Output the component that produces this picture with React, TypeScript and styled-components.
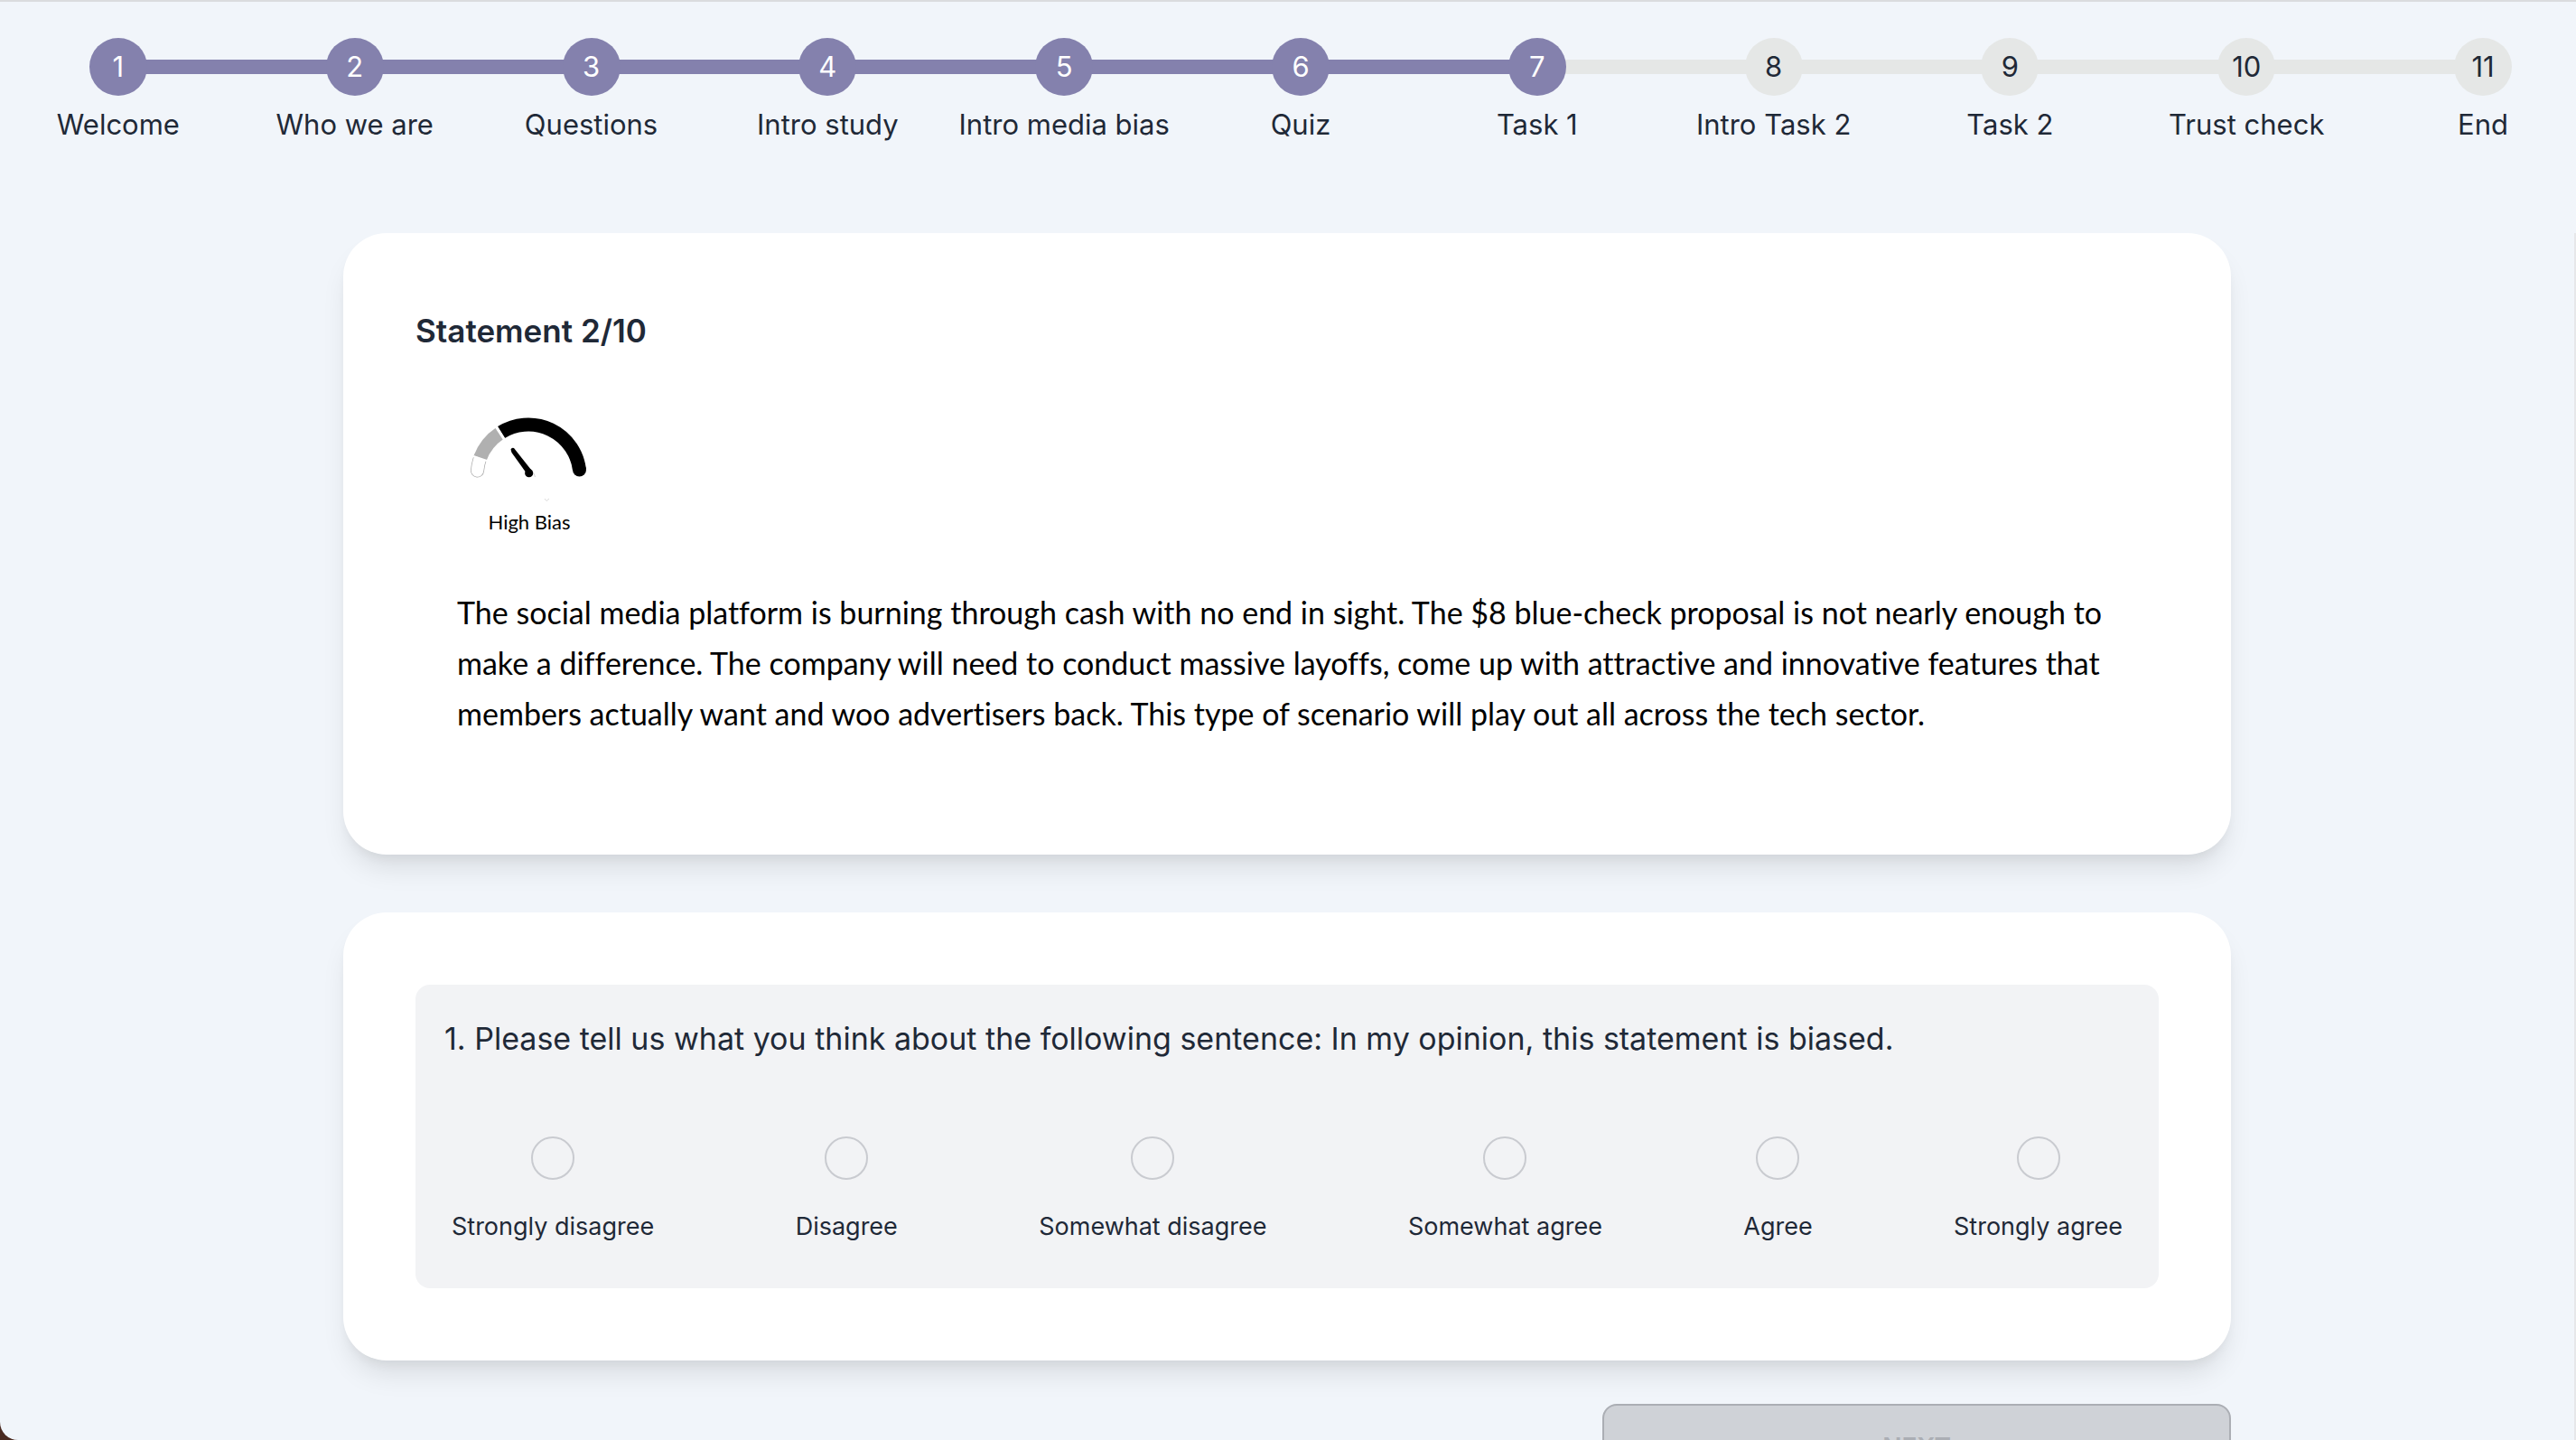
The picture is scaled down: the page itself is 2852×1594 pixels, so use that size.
import React, { useState } from "react";
import styled, { createGlobalStyle } from "styled-components";

const ink = "#1f2937";
const purple = "#8481ad";
const mist = "#e5e7e6";

const GlobalStyle = createGlobalStyle`
  *, *::before, *::after { box-sizing: border-box; }
  body {
    margin: 0;
    background: #4a2a20;
    color: ${ink};
    font-family: Inter, "Liberation Sans", sans-serif;
  }
`;

const Page = styled.div`
  display: flex;
  flex-direction: column;
  height: 100vh;
  overflow: hidden;
  background: #f1f5fa;
  border-top: 2px solid #dadcde;
  border-bottom-left-radius: 20px;
`;

const Steps = styled.ol`
  display: grid;
  grid-auto-flow: column;
  grid-auto-columns: 1fr;
  flex: none;
  margin: 0 -28px 0 0;
  padding: 40px 0 100px;
  list-style: none;
`;

const Step = styled.li`
  display: flex;
  flex-direction: column;
  gap: 12px;
  min-width: 0;
`;

const Track = styled.div`
  display: flex;
  align-items: center;
`;

const Line = styled.span<{ $color: string }>`
  flex: 1;
  height: 16px;
  margin: 0 -2px;
  background: ${(p) => p.$color};
`;

const Dot = styled.span<{ $done: boolean }>`
  display: flex;
  align-items: center;
  justify-content: center;
  position: relative;
  width: 64px;
  height: 64px;
  border-radius: 50%;
  background: ${(p) => (p.$done ? purple : mist)};
  color: ${(p) => (p.$done ? "#ffffff" : ink)};
  font-size: 31px;
  line-height: 40px;
`;

const StepLabel = styled.span`
  font-size: 31px;
  line-height: 40px;
  text-align: center;
  white-space: nowrap;
`;

const Main = styled.main`
  display: flex;
  flex: 1;
  flex-direction: column;
  align-items: center;
  min-height: 0;
  border-right: 2px solid #e6e7e9;
`;

const Column = styled.div`
  display: flex;
  flex-direction: column;
  gap: 64px;
  width: 100%;
  max-width: 2090px;
`;

const Card = styled.section`
  padding: 80px;
  border-radius: 48px;
  background: #ffffff;
  box-shadow: 0 20px 30px -6px rgba(0, 0, 0, 0.1),
    0 8px 12px -4px rgba(0, 0, 0, 0.05);
`;

const Title = styled.h1`
  margin: 0;
  font-size: 35px;
  font-weight: 600;
  line-height: 56px;
`;

const Statement = styled.div`
  display: flex;
  flex-direction: column;
  align-items: flex-start;
  gap: 56px;
  padding: 56px 46px 48px;
  color: #000000;
  font-family: Lato, "Liberation Sans", sans-serif;
  font-variant-ligatures: no-common-ligatures;
`;

const Gauge = styled.figure`
  width: 160px;
  margin: 0;

  svg {
    display: block;
    width: 160px;
    height: 112px;
  }
`;

const Caption = styled.figcaption`
  font-size: 22px;
  line-height: 32px;
  text-align: center;
`;

const Quote = styled.p`
  margin: 0;
  font-size: 34px;
  line-height: 56px;
`;

const Question = styled.fieldset`
  min-width: 0;
  margin: 0;
  padding: 32px 32px 48px;
  border: 0;
  border-radius: 16px;
  background: #f2f3f5;
`;

const Prompt = styled.legend`
  float: left;
  width: 100%;
  margin-bottom: 80px;
  padding: 0;
  font-size: 34px;
  line-height: 56px;
`;

const Options = styled.div`
  display: flex;
  clear: both;
  justify-content: space-between;
  padding: 0 8px;
`;

const Option = styled.label`
  display: flex;
  flex-direction: column;
  align-items: center;
  gap: 32px;
  font-size: 27px;
  line-height: 40px;
  cursor: pointer;
`;

const Radio = styled.input`
  appearance: none;
  width: 48px;
  height: 48px;
  margin: 0;
  border: 2px solid #c9cbd0;
  border-radius: 50%;
  cursor: pointer;

  &:checked {
    background: ${purple};
    box-shadow: inset 0 0 0 8px #f2f3f5;
  }
`;

const Actions = styled.div`
  display: flex;
  justify-content: flex-end;
  margin-top: -16px;
`;

const NextButton = styled.button`
  width: 33.3%;
  height: 96px;
  border: 2px solid #abaeb4;
  border-radius: 16px;
  background: #cfd2d7;
  color: #abaeb4;
  font: 600 28px/40px Inter, "Liberation Sans", sans-serif;

  &:enabled {
    border-color: ${purple};
    background: ${purple};
    color: #ffffff;
    cursor: pointer;
  }
`;

const steps = [
  "Welcome",
  "Who we are",
  "Questions",
  "Intro study",
  "Intro media bias",
  "Quiz",
  "Task 1",
  "Intro Task 2",
  "Task 2",
  "Trust check",
  "End",
];
const current = 6;

const answers = [
  "Strongly disagree",
  "Disagree",
  "Somewhat disagree",
  "Somewhat agree",
  "Agree",
  "Strongly agree",
];

function lineColor(index: number) {
  if (index <= 0 || index >= steps.length) return "transparent";
  return index <= current ? purple : mist;
}

function BiasGauge() {
  return (
    <svg viewBox="0 0 160 112" aria-hidden="true" fill="none">
      <path
        d="M22.5 71 A57 57 0 0 1 25.6 57"
        stroke="#a8a8a8"
        strokeWidth="15"
        strokeLinecap="round"
      />
      <path
        d="M22.5 71 A57 57 0 0 1 25.6 57"
        stroke="#ffffff"
        strokeWidth="13.6"
        strokeLinecap="round"
      />
      <path d="M25.6 57 A57 57 0 0 1 47.2 29.8" stroke="#b0b0b0" strokeWidth="15" />
      <path
        d="M49 28.5 A57 57 0 0 1 135.5 70"
        stroke="#000000"
        strokeWidth="15"
      />
      <circle cx="135.5" cy="70" r="7.5" fill="#000000" />
      <path d="M18 55 L33 60" stroke="#ffffff" strokeWidth="2" />
      <path d="M42 20.5 L54 39" stroke="#ffffff" strokeWidth="3" />
      <path d="M59.5 47.5 Q60.5 45 63 46 L82 70 L77 74 L60.5 51 Z" fill="#000000" />
      <circle cx="79.7" cy="73.7" r="4.6" fill="#000000" />
      <path d="M85 74 L86.5 78" stroke="#bbbbbb" strokeWidth="0.6" />
      <path d="M97 102 L99 104.5 L102 102" stroke="#cccccc" strokeWidth="0.7" />
    </svg>
  );
}

export default function App() {
  const [answer, setAnswer] = useState<string | null>(null);

  return (
    <>
      <GlobalStyle />
      <Page>
        <Steps>
          {steps.map((name, i) => (
            <Step key={name} aria-current={i === current ? "step" : undefined}>
              <Track>
                <Line $color={lineColor(i)} />
                <Dot $done={i <= current}>{i + 1}</Dot>
                <Line $color={lineColor(i + 1)} />
              </Track>
              <StepLabel>{name}</StepLabel>
            </Step>
          ))}
        </Steps>
        <Main>
          <Column>
            <Card>
              <Title>Statement 2/10</Title>
              <Statement>
                <Gauge>
                  <BiasGauge />
                  <Caption>High Bias</Caption>
                </Gauge>
                <Quote>
                  The social media platform is burning through cash with no end in
                  sight. The $8 blue-check proposal is not nearly enough to make a
                  difference. The company will need to conduct massive layoffs, come
                  up with attractive and innovative features that members actually
                  want and woo advertisers back. This type of scenario will play out
                  all across the tech sector.
                </Quote>
              </Statement>
            </Card>
            <Card>
              <Question>
                <Prompt>
                  1. Please tell us what you think about the following sentence: In my
                  opinion, this statement is biased.
                </Prompt>
                <Options>
                  {answers.map((text) => (
                    <Option key={text}>
                      <Radio
                        type="radio"
                        name="opinion"
                        value={text}
                        checked={answer === text}
                        onChange={() => setAnswer(text)}
                      />
                      {text}
                    </Option>
                  ))}
                </Options>
              </Question>
            </Card>
            <Actions>
              <NextButton type="button" disabled={answer === null}>
                NEXT
              </NextButton>
            </Actions>
          </Column>
        </Main>
      </Page>
    </>
  );
}
